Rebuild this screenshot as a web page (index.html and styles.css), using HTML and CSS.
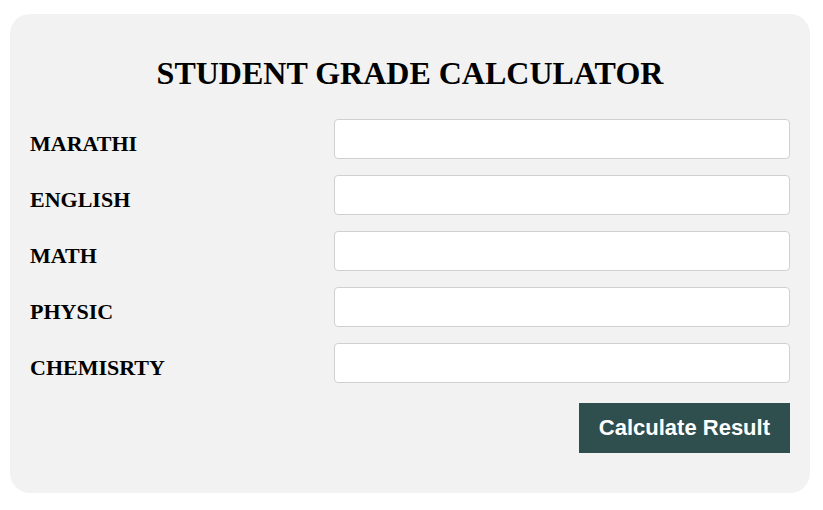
FILE: index.html
```html
<!DOCTYPE html>
<html lang="en">
<head>
<meta charset="utf-8">
<title>Student Grade Calculator</title>
<link rel="stylesheet" href="styles.css">
</head>
<body>
<div class="card">
  <h1 class="title">STUDENT GRADE CALCULATOR</h1>
  <form class="form">
    <div class="row"><label class="label">MARATHI</label><input class="field" type="text"></div>
    <div class="row"><label class="label">ENGLISH</label><input class="field" type="text"></div>
    <div class="row"><label class="label">MATH</label><input class="field" type="text"></div>
    <div class="row"><label class="label">PHYSIC</label><input class="field" type="text"></div>
    <div class="row"><label class="label">CHEMISRTY</label><input class="field" type="text"></div>
    <div class="actions"><button class="btn" type="button">Calculate Result</button></div>
  </form>
</div>
</body>
</html>
```

FILE: styles.css
```css
html, body {
  margin: 0;
  padding: 0;
  background: #ffffff;
}

.card {
  box-sizing: border-box;
  width: 800px;
  margin: 14px 0 0 10px;
  padding: 20px;
  background: #f2f2f2;
  border-radius: 20px;
  font-family: "Liberation Serif", "Times New Roman", serif;
}

.title {
  margin: 21.44px 0 27px;
  font-size: 32px;
  font-weight: bold;
  text-align: center;
  color: #000;
}

.form {
  display: flex;
  flex-direction: column;
  gap: 16px;
}

.row {
  display: grid;
  grid-template-columns: 304px 1fr;
  align-items: center;
}

.label {
  padding-top: 9px;
  font-size: 22px;
  font-weight: bold;
  color: #000;
}

.field {
  box-sizing: border-box;
  height: 40px;
  width: 100%;
  margin: 0;
  padding: 8px 10px;
  border: 1px solid #d0d0d0;
  border-radius: 4px;
  background: #fff;
  font-size: 16px;
}

.actions {
  display: flex;
  justify-content: flex-end;
  padding-top: 3.5px;
  padding-bottom: 20.5px;
}

.btn {
  box-sizing: border-box;
  height: 50px;
  padding: 0 20px;
  border: none;
  background: #2f4f4f;
  color: #fff;
  font-family: "Liberation Sans", Arial, sans-serif;
  font-size: 22px;
  font-weight: bold;
  cursor: pointer;
}
```
